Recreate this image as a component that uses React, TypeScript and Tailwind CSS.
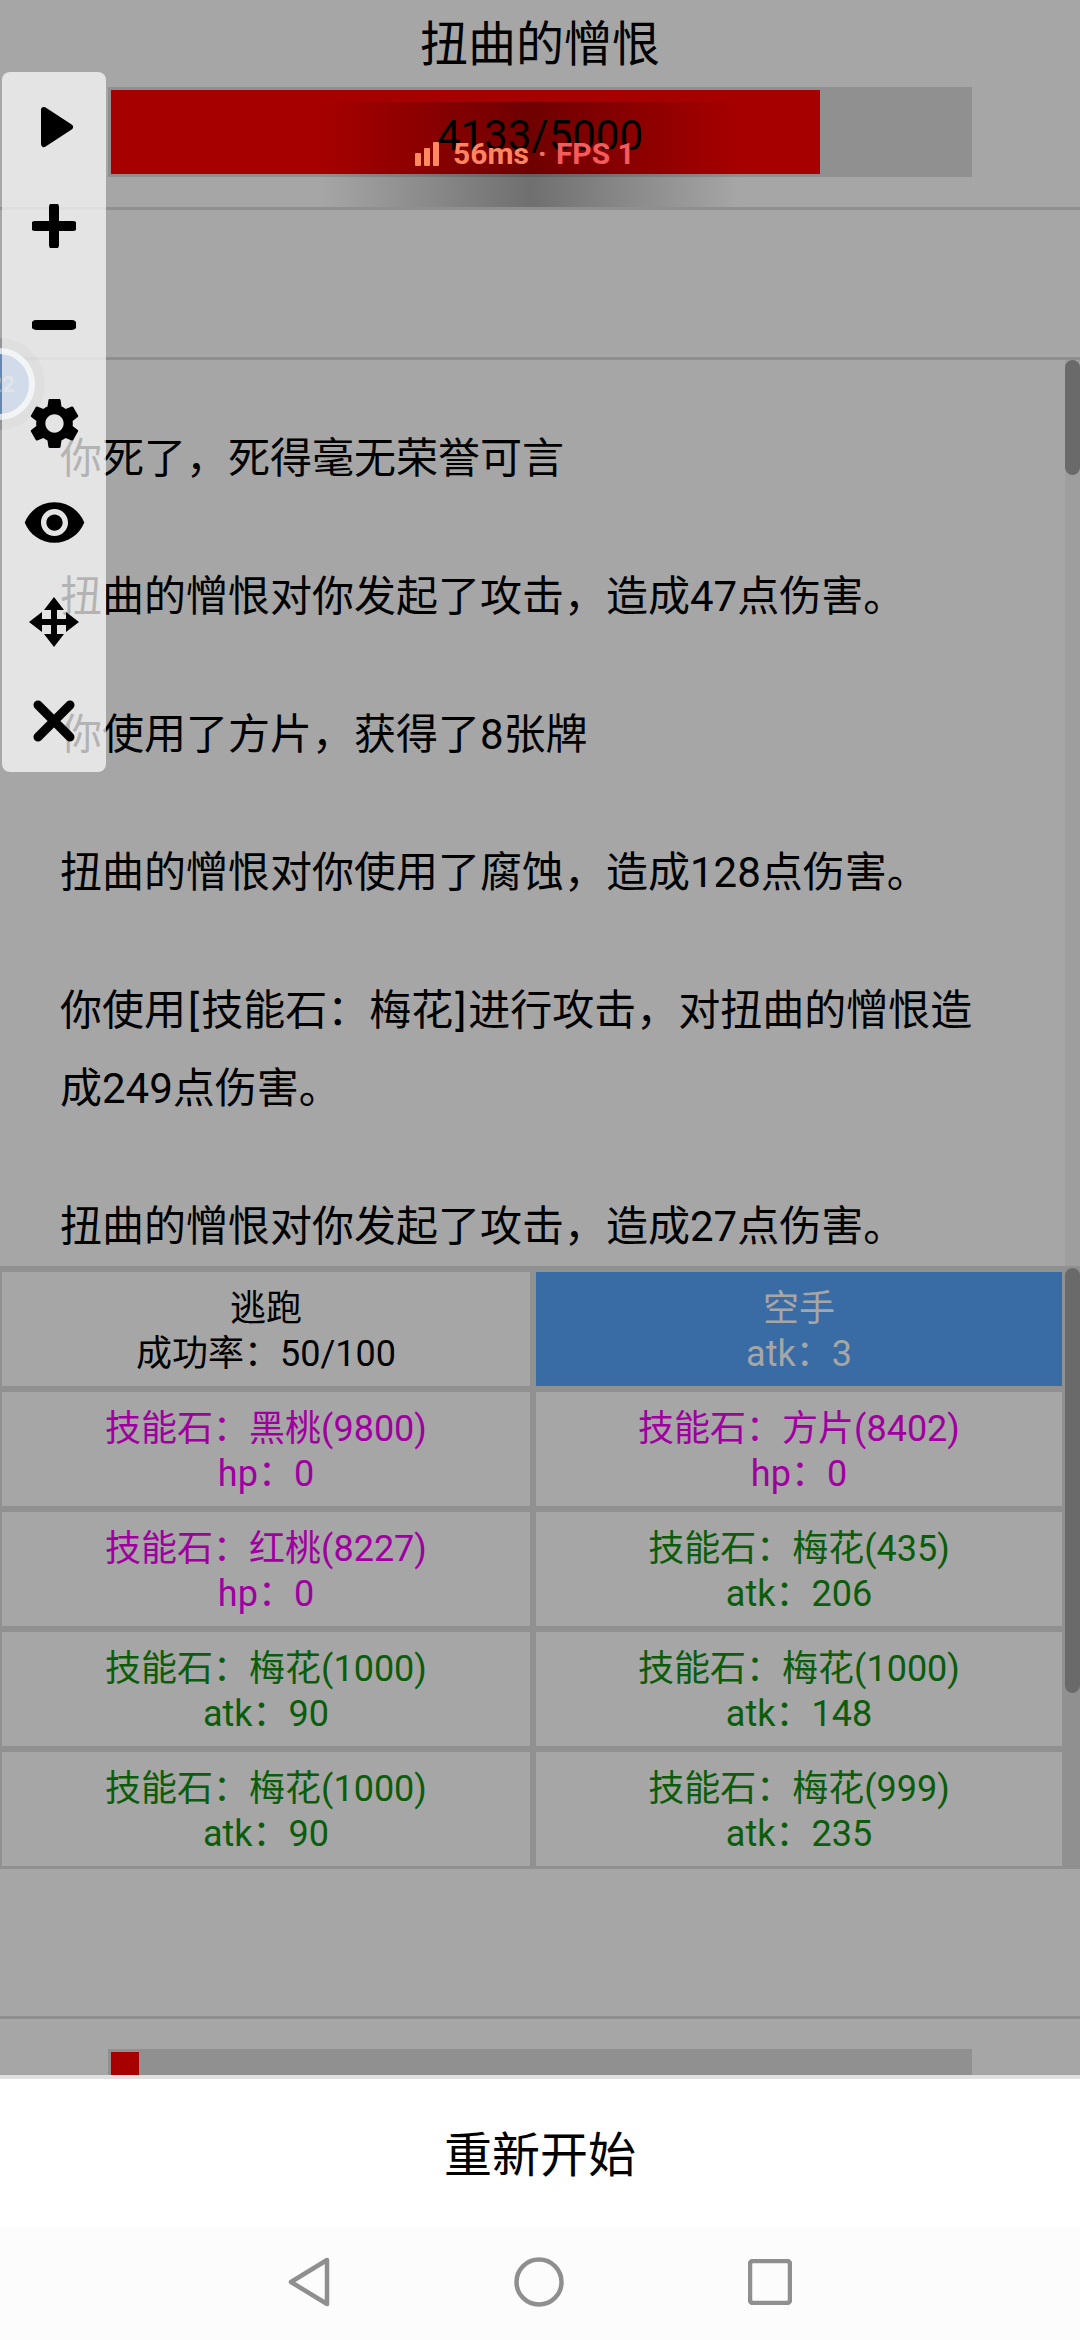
import { MdSettings, MdVisibility } from "react-icons/md";

const logLines = [
  "你死了，死得毫无荣誉可言",
  "扭曲的憎恨对你发起了攻击，造成47点伤害。",
  "你使用了方片，获得了8张牌",
  "扭曲的憎恨对你使用了腐蚀，造成128点伤害。",
];

const cells = [
  { title: "逃跑", sub: "成功率：50/100", color: "text-black", bg: "bg-[#a6a6a6]" },
  { title: "空手", sub: "atk：3", color: "text-[#a6a6a6]", bg: "bg-[#396ca4]" },
  { title: "技能石：黑桃(9800)", sub: "hp：0", color: "text-[#a000a0]", bg: "bg-[#a6a6a6]" },
  { title: "技能石：方片(8402)", sub: "hp：0", color: "text-[#a000a0]", bg: "bg-[#a6a6a6]" },
  { title: "技能石：红桃(8227)", sub: "hp：0", color: "text-[#a000a0]", bg: "bg-[#a6a6a6]" },
  { title: "技能石：梅花(435)", sub: "atk：206", color: "text-[#0b5c0b]", bg: "bg-[#a6a6a6]" },
  { title: "技能石：梅花(1000)", sub: "atk：90", color: "text-[#0b5c0b]", bg: "bg-[#a6a6a6]" },
  { title: "技能石：梅花(1000)", sub: "atk：148", color: "text-[#0b5c0b]", bg: "bg-[#a6a6a6]" },
  { title: "技能石：梅花(1000)", sub: "atk：90", color: "text-[#0b5c0b]", bg: "bg-[#a6a6a6]" },
  { title: "技能石：梅花(999)", sub: "atk：235", color: "text-[#0b5c0b]", bg: "bg-[#a6a6a6]" },
];

const Toolbar = () => (
  <div className="absolute left-[2px] top-[72px] w-[104px] h-[700px] pt-[5px] rounded-[8px] bg-white/70 flex flex-col items-center text-black">
    {/* Play */}
    <div className="h-[99px] w-full flex items-center justify-center">
      <svg width="34" height="42" viewBox="0 0 34 42" className="ml-[6px]">
        <path d="M4 4 L30 21 L4 38 Z" fill="black" stroke="black" strokeWidth="6" strokeLinejoin="round" />
      </svg>
    </div>
    {/* Plus */}
    <div className="h-[99px] w-full flex items-center justify-center">
      <svg width="44" height="44" viewBox="0 0 44 44">
        <path d="M22 3 V41 M3 22 H41" stroke="black" strokeWidth="10" strokeLinecap="round" />
      </svg>
    </div>
    {/* Minus */}
    <div className="h-[99px] w-full flex items-center justify-center">
      <svg width="44" height="12" viewBox="0 0 44 12">
        <path d="M4 6 H40" stroke="black" strokeWidth="10" strokeLinecap="round" />
      </svg>
    </div>
    <div className="h-[99px] w-full flex items-center justify-center">
      <MdSettings size={61} />
    </div>
    <div className="h-[99px] w-full flex items-center justify-center">
      <MdVisibility size={65} />
    </div>
    {/* Move */}
    <div className="h-[99px] w-full flex items-center justify-center">
      <svg width="50" height="50" viewBox="0 0 50 50" fill="black">
        <path d="M25 8 V42 M8 25 H42" stroke="black" strokeWidth="6" />
        <path d="M25 0 L35 13 H15 Z M25 50 L35 37 H15 Z M0 25 L13 15 V35 Z M50 25 L37 15 V35 Z" />
      </svg>
    </div>
    {/* Close */}
    <div className="h-[99px] w-full flex items-center justify-center">
      <svg width="42" height="42" viewBox="0 0 42 42">
        <path d="M5 5 L37 37 M37 5 L5 37" stroke="black" strokeWidth="9" strokeLinecap="round" />
      </svg>
    </div>
  </div>
);

const App = () => {
  return (
    <div
      className="relative w-[1080px] h-[2340px] overflow-hidden bg-[#a6a6a6] text-black"
      style={{ fontFamily: 'Roboto, "Noto Sans CJK SC", sans-serif' }}
    >
      {/* Enemy header */}
      <div className="h-[87px] pt-[2px] flex items-center justify-center text-[48px]">扭曲的憎恨</div>
      <div className="h-[123px] border-b-[3px] border-[#8f8f8f]">
        <div className="relative mx-[108px] h-[90px] bg-[#909090] p-[3px]">
          <div className="h-full w-[709px] bg-[#a60000]" />
          <div className="absolute inset-0 pt-[8px] flex items-center justify-center text-[42px] leading-none">
            4133/5000
          </div>
        </div>
      </div>

      <div className="h-[150px] border-b-[3px] border-[#8f8f8f]" />

      {/* Battle log */}
      <div className="relative h-[906px] overflow-hidden pl-[60px] pr-[80px] pt-[60px] text-[42px] leading-[78px]">
        <div className="flex flex-col gap-[60px]">
          {logLines.map((line) => (
            <p key={line}>{line}</p>
          ))}
          <p>
            你使用<span className="px-[2px]">[</span>技能石：梅花<span className="px-[2px]">]</span>
            进行攻击，对扭曲的憎恨造成249点伤害。
          </p>
          <p>扭曲的憎恨对你发起了攻击，造成27点伤害。</p>
        </div>
        <div className="absolute right-0 top-0 h-full w-[15px] bg-[#9e9e9e]">
          <div className="h-[115px] rounded-full bg-[#6a6a6a]" />
        </div>
      </div>

      {/* Actions */}
      <div className="relative h-[603px] bg-[#909090] pt-[6px] pb-[3px] pl-[2px] pr-[18px]">
        <div className="grid grid-cols-[528px_526px] auto-rows-[114px] gap-[6px] h-full">
          {cells.map((cell, i) => (
            <div
              key={i}
              className={`${cell.bg} ${cell.color} flex flex-col items-center justify-center pt-[6px] text-[36px] leading-[45px]`}
            >
              <span>{cell.title}</span>
              <span>{cell.sub}</span>
            </div>
          ))}
        </div>
        <div className="absolute right-0 top-[2px] h-[425px] w-[15px] rounded-full bg-[#6a6a6a]" />
      </div>

      <div className="h-[150px] border-b-[3px] border-[#8f8f8f]" />

      {/* Player bar */}
      <div className="mt-[30px] mx-[108px] h-[90px] bg-[#909090] p-[3px]">
        <div className="h-full w-[28px] bg-[#a60000]" />
      </div>

      {/* Network overlay */}
      <div className="absolute left-[320px] top-[102px] h-[105px] w-[420px] bg-linear-to-r from-transparent via-black/33 to-transparent" />
      <div className="absolute left-[415px] top-[136px] flex items-end text-[30px] font-bold leading-[36px]">
        <svg width="24" height="24" viewBox="0 0 24 24" className="mb-[6px] mr-[14px]">
          <rect x="0" y="11" width="6" height="13" rx="1" fill="#ff8a60" />
          <rect x="9" y="6" width="6" height="18" rx="1" fill="#ff8a60" />
          <rect x="18" y="0" width="6" height="24" rx="1" fill="#ff8a60" />
        </svg>
        <span className="text-[#ff8560]">56ms</span>
        <span className="mx-[9px] text-[#f07060]">·</span>
        <span className="text-[#f25c5c]">FPS 1</span>
      </div>

      {/* Floating ball, sits under the translucent toolbar */}
      <div className="absolute left-[-47px] top-[338px] w-[92px] h-[92px] rounded-full bg-black/10 flex items-center justify-center">
        <div className="w-[72px] h-[72px] rounded-full bg-[#6488b4] border-[6px] border-[#d4dbe2] flex items-center justify-end pr-[14px] text-[22px] font-bold text-[#96a8c0]">
          22
        </div>
      </div>

      <Toolbar />

      {/* Bottom sheet */}
      <div className="absolute left-0 right-0 bottom-0 h-[265px] border-t-[4px] border-[#e0e0e0] bg-white">
        <div className="h-[148px] pt-[6px] flex items-center justify-center text-[48px]">重新开始</div>
        <div className="h-[113px] pb-[4px] bg-[#fcfcfc] flex items-center justify-center gap-[184px]">
          <svg width="42" height="50" viewBox="0 0 42 50" fill="none">
            <path d="M39 3 L3 25 L39 47 Z" stroke="#8f8f8f" strokeWidth="4.5" strokeLinejoin="round" />
          </svg>
          <svg width="50" height="50" viewBox="0 0 50 50" fill="none">
            <circle cx="25" cy="25" r="22.5" stroke="#8f8f8f" strokeWidth="4.5" />
          </svg>
          <svg width="44" height="46" viewBox="0 0 44 46" fill="none">
            <rect x="2" y="2" width="40" height="42" rx="3" stroke="#8f8f8f" strokeWidth="4.5" />
          </svg>
        </div>
      </div>
    </div>
  );
};

export default App;
